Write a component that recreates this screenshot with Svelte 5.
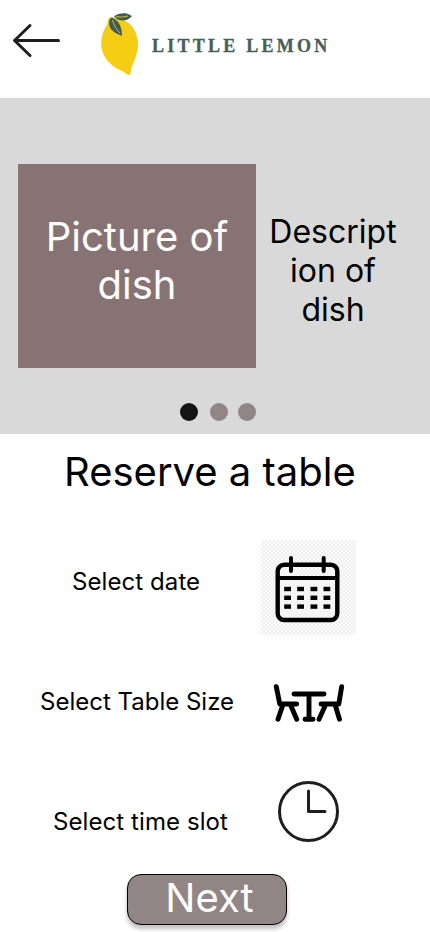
<script>
  const slides = [0, 1, 2];
  let active = $state(0);
  const cols = [26.5, 39.5, 52.8, 65.8];
  const rows = [49, 57.8, 66.6];
</script>

<main>
  <header>
    <svg class="back" width="50" height="38" viewBox="0 0 50 38" aria-label="Back">
      <path d="M46.5 18.5H3M18 3.5L2.5 18.5L18 33.5" />
    </svg>
    <svg class="lemon" width="42" height="66" viewBox="0 0 42 66">
      <path fill="#f4cd14" d="M11 5C16 7 23 7 27 10C34 14 38 23 38 33C38 42 33 51 31.500 56C30.500 59 31.500 63 29 63C27 63 25 60 20 58C9 53 2 44 1.200 33C1 26 3 18 7 13C8 10 7 6 11 5Z" />
      <path fill="#405c56" d="M14 4.500C17 1.500 21 1 26 1.200C29 2 31 3 31.800 4.500C29 7 26 9 22 8.500C18 8 16 7 14 4.500Z" />
      <path fill="#405c56" d="M12 5.500C17 8 22 12 22 24C15 21 9 18 9 11C9 8 10 6 12 5.500Z" />
      <path fill="none" stroke="#d3be30" d="M12.500 8C14 14 17 18 20 21M16 4.500C20 5.500 24 5 28 4" />
    </svg>
    <span class="brand">LITTLE LEMON</span>
  </header>

  <section class="hero">
    <div class="dish">
      <div class="picture">Picture of<br />dish</div>
      <p>Descript<br />ion of<br />dish</p>
    </div>
    <nav>
      {#each slides as i}
        <button class:active={active === i} aria-label={`Slide ${i + 1}`} onclick={() => (active = i)}></button>
      {/each}
    </nav>
  </section>

  <section class="reserve">
    <h1>Reserve a table</h1>
    <div class="row date">
      <span>Select date</span>
      <svg width="95" height="95" viewBox="0 0 95 95">
        <defs>
          <pattern id="checks" width="4" height="4" patternUnits="userSpaceOnUse">
            <rect width="4" height="4" fill="#fafafa" />
            <path fill="#f0f0f0" d="M0 0h2v2H0zM2 2h2v2H2z" />
          </pattern>
        </defs>
        <rect width="95" height="95" fill="url(#checks)" />
        <rect x="16.700" y="24.700" width="59.600" height="55.300" rx="6.500" fill="none" stroke="#000" stroke-width="4.400" />
        <path d="M16 38H77" stroke="#000" stroke-width="4.200" />
        <path d="M30 18V31M62.700 18V31" stroke="#000" stroke-width="4" stroke-linecap="round" />
        {#each rows as y}
          {#each cols as x}
            <rect x={x - 3.3} y={y - 2.2} width="6.800" height="4.400" />
          {/each}
        {/each}
      </svg>
    </div>
    <div class="row size">
      <span>Select Table Size</span>
      <svg width="74" height="42" viewBox="0 0 74 42">
        <g fill="none" stroke="#000" stroke-width="4.900" stroke-linecap="round" stroke-linejoin="round">
          <path d="M4.300 4.700L7.800 22H24.700M10.500 24L6 37.200M19 24L24.700 37.200" />
          <path d="M69.700 4.700L66.800 22H49M63.500 24L67.500 37.200M53 24L47 37.200" />
          <path d="M22 12H52M37 12V37.200M33 37.200H41" />
        </g>
      </svg>
    </div>
    <div class="row time">
      <span>Select time slot</span>
      <svg width="64" height="64" viewBox="0 0 64 64">
        <circle cx="32.500" cy="32.500" r="29" fill="none" stroke="#1e1e1e" stroke-width="3" />
        <path d="M32.500 12V32.500H49" fill="none" stroke="#1e1e1e" stroke-width="3" stroke-linecap="round" stroke-linejoin="round" />
      </svg>
    </div>
    <button class="next">Next</button>
  </section>
</main>

<style>
  main {
    width: 430px;
    height: 932px;
    overflow: hidden;
    display: flex;
    flex-direction: column;
    background: #fff;
    color: #000;
    font-family: Inter, sans-serif;
    font-weight: 400;
  }
  header { height: 98px; display: flex; align-items: flex-start; }
  .back { margin: 22px 0 0 12px; fill: none; stroke: #1e1e1e; stroke-width: 3; stroke-linecap: round; stroke-linejoin: round; }
  .lemon { margin: 12px 0 0 38px; }
  .brand {
    margin: 35px 0 0 10px;
    font: bold 18px/22px "Liberation Serif", serif;
    letter-spacing: 3.25px;
    color: #495e57;
    -webkit-text-stroke: 0.3px #495e57;
    white-space: nowrap;
  }
  .hero { height: 336px; background: #d9d9d9; display: flex; flex-direction: column; }
  .dish { display: flex; margin: 66px 0 0 18px; height: 204px; }
  .picture {
    width: 238px;
    padding-top: 49px;
    box-sizing: border-box;
    background: #877373;
    color: #fff;
    text-align: center;
    font-size: 40px;
    line-height: 48px;
  }
  .dish p { margin: 48px 0 0 8px; width: 138px; text-align: center; font-size: 32px; line-height: 39px; }
  nav { display: flex; gap: 10px; margin: 35px 0 0 180px; }
  nav button { width: 18px; height: 18px; padding: 0; border: 0; border-radius: 50%; background: #918585; }
  nav button:first-child { margin-right: 2px; }
  nav button.active { background: #141414; }
  .reserve { display: flex; flex-direction: column; flex: 1; }
  h1 { margin: 14px 0 0 64px; font-size: 40px; line-height: 48px; font-weight: 400; white-space: nowrap; }
  .row { display: flex; align-items: flex-start; font-size: 24px; line-height: 29px; letter-spacing: 0.08px; }
  .row span { white-space: nowrap; flex: none; }
  .row svg { flex: none; }
  .date { margin-top: 44px; height: 95px; }
  .date span { width: 189px; margin-left: 72px; padding-top: 27px; }
  .size { margin-top: 45px; height: 42px; }
  .size span { width: 232px; margin-left: 40px; padding-top: 7px; letter-spacing: 0; }
  .size svg { margin-top: 2px; }
  .time { margin-top: 57px; height: 64px; }
  .time span { width: 223px; margin-left: 53px; padding-top: 28px; }
  .next {
    margin: 31px 0 0 127px;
    width: 160px;
    height: 51px;
    flex: none;
    box-sizing: border-box;
    padding: 0 0 4px 5px;
    border: 1px solid #000;
    border-radius: 14px;
    background: #918585;
    box-shadow: 0 4px 4px rgba(0, 0, 0, 0.25);
    color: #fff;
    font: 400 40px/45px Inter, sans-serif;
  }
</style>
